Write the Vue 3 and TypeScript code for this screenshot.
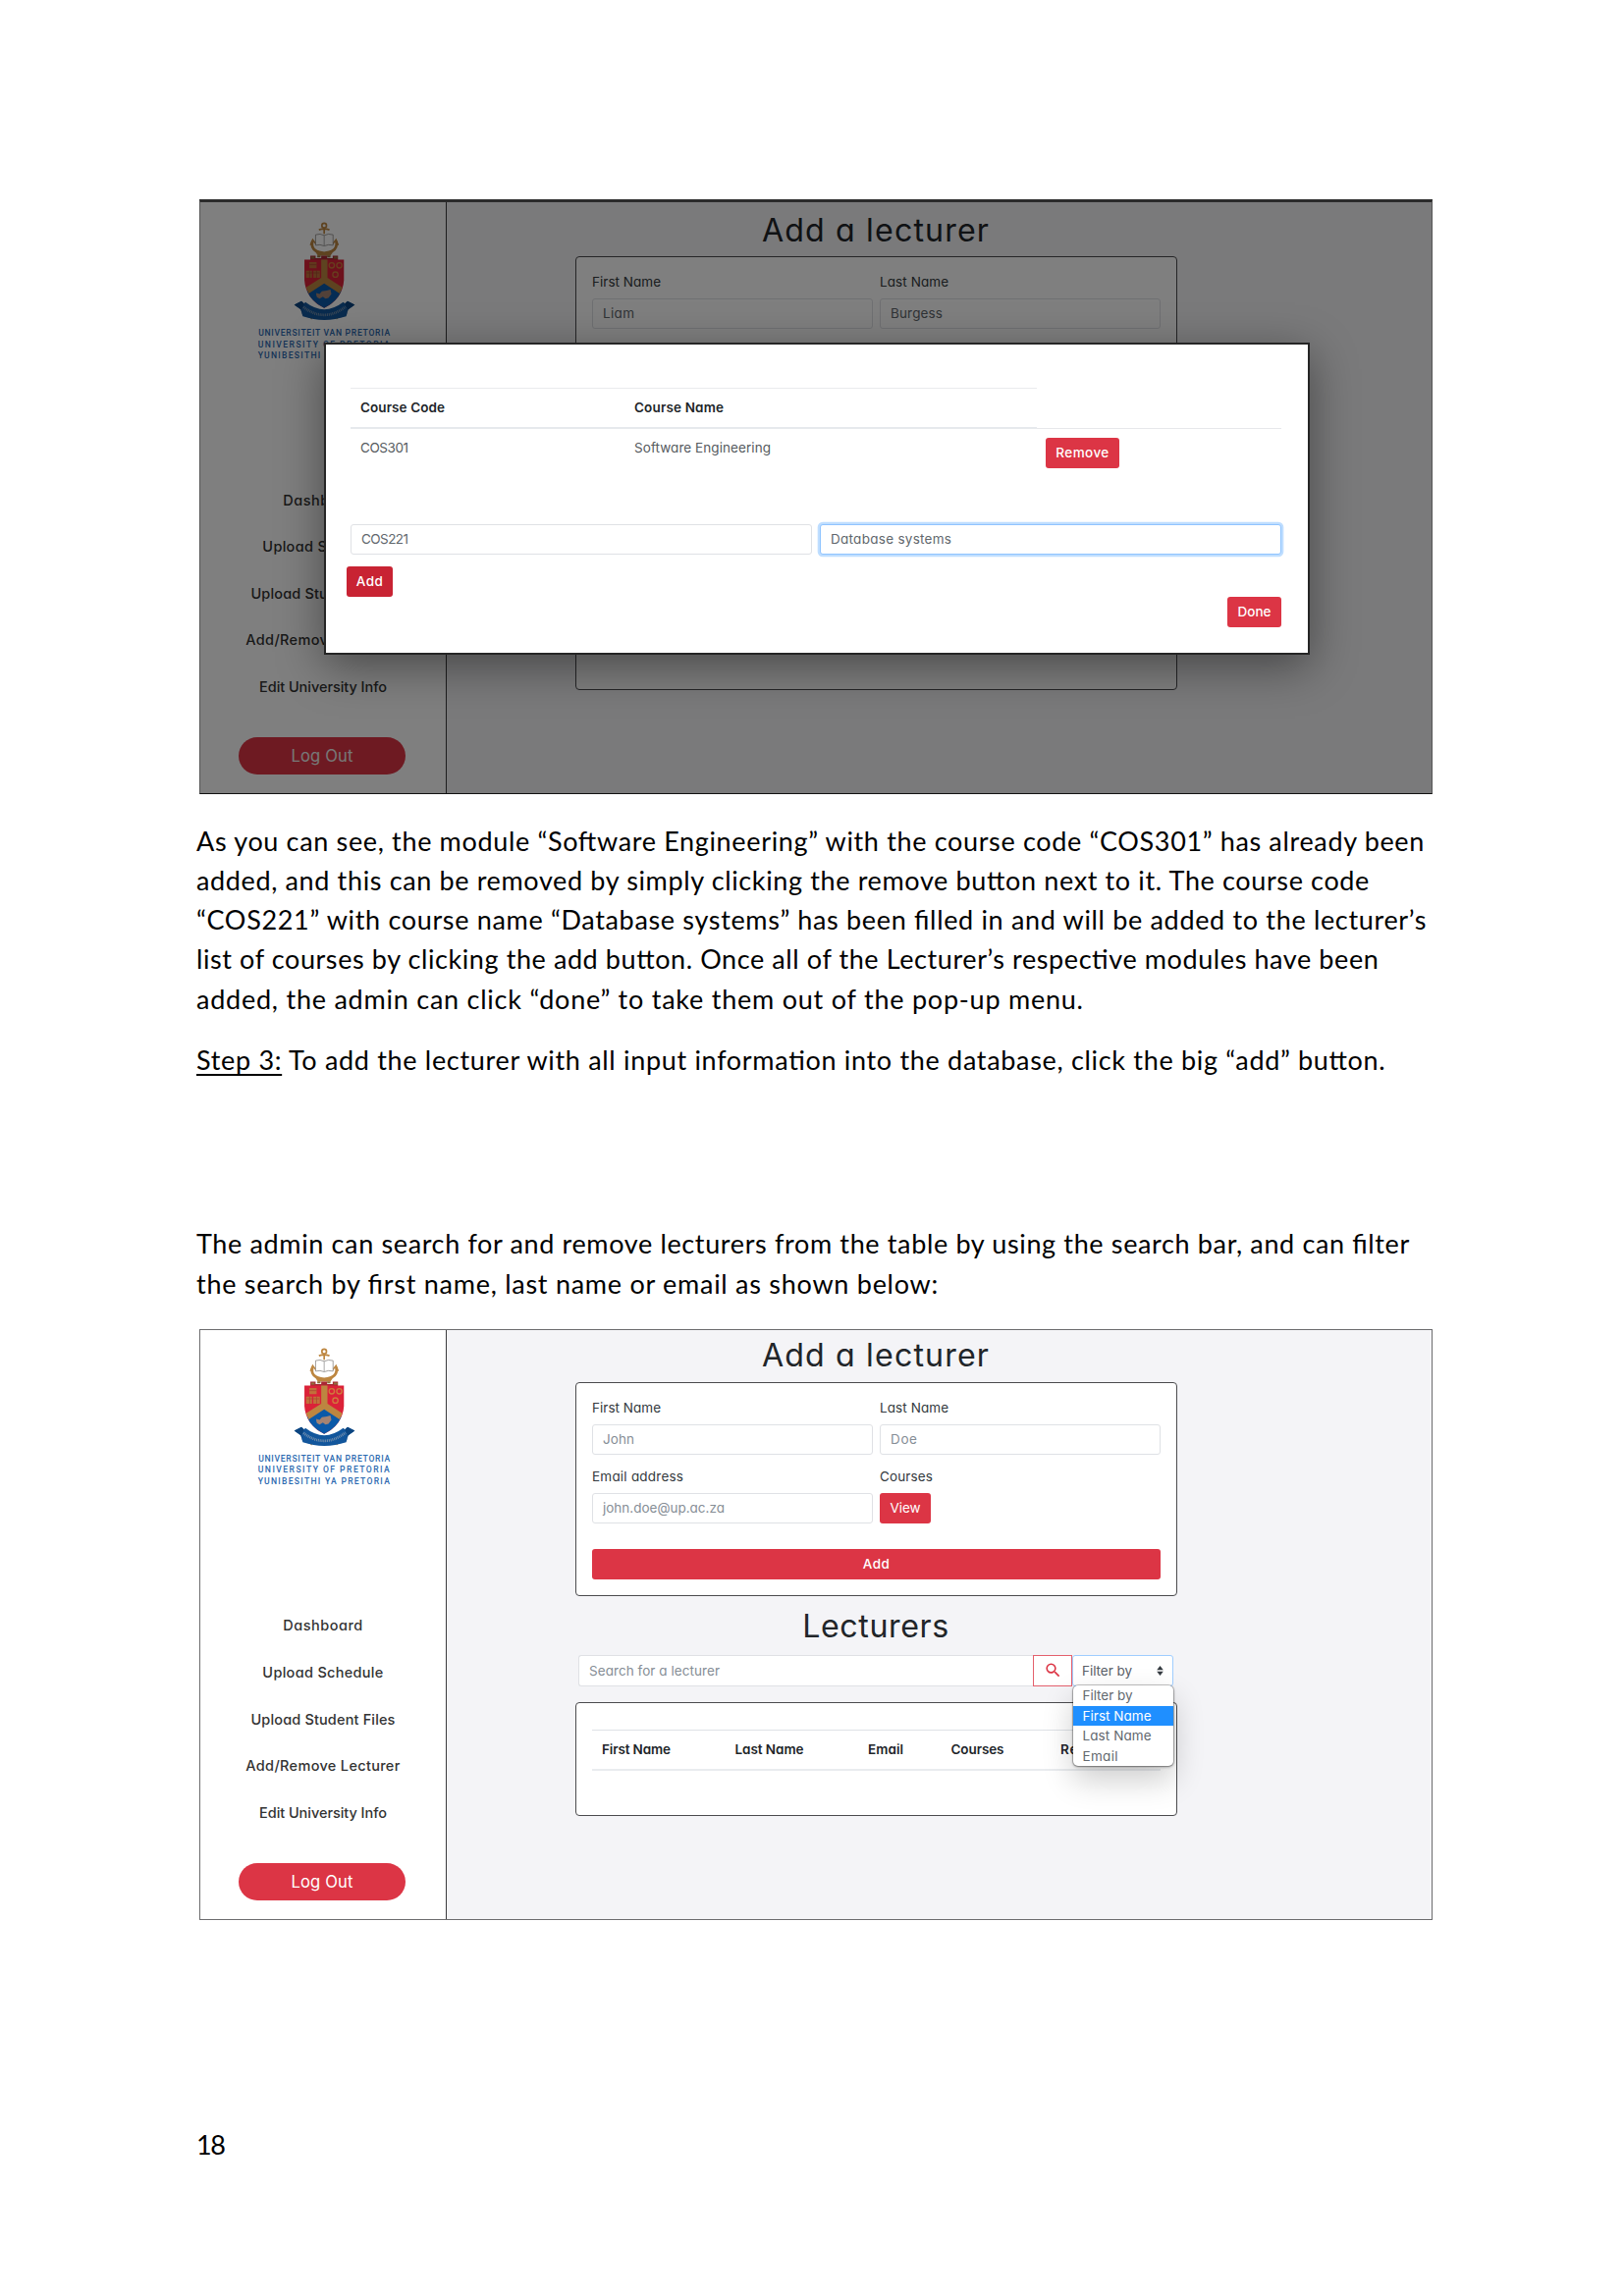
<script setup lang="ts">
interface Label { text: string; w: number }

// Spreads the letters of an element so that its text takes the given width.
const vFit = {
  mounted(el: HTMLElement, binding: { value: number }) {
    const count = (el.textContent ?? '').trim().length
    if (count < 2) return
    const natural = el.getBoundingClientRect().width
    el.style.letterSpacing = `${(binding.value - natural) / (count - 1)}px`
  },
}

const nav: Label[] = [
  { text: 'Dashboard', w: 81 },
  { text: 'Upload Schedule', w: 123 },
  { text: 'Upload Student Files', w: 147 },
  { text: 'Add/Remove Lecturer', w: 157 },
  { text: 'Edit University Info', w: 130 },
]
const names: Label[] = [
  { text: 'UNIVERSITEIT VAN PRETORIA', w: 134 },
  { text: 'UNIVERSITY OF PRETORIA', w: 134 },
  { text: 'YUNIBESITHI YA PRETORIA', w: 134 },
]
const intro: Label[] = [
  { text: 'As you can see, the module “Software Engineering” with the course code “COS301” has already been', w: 1251 },
  { text: 'added, and this can be removed by simply clicking the remove button next to it. The course code', w: 1195 },
  { text: '“COS221” with course name “Database systems” has been filled in and will be added to the lecturer’s', w: 1253 },
  { text: 'list of courses by clicking the add button. Once all of the Lecturer’s respective modules have been', w: 1205 },
  { text: 'added, the admin can click “done” to take them out of the pop-up menu.', w: 903 },
]
const search: Label[] = [
  { text: 'The admin can search for and remove lecturers from the table by using the search bar, and can filter', w: 1236 },
  { text: 'the search by first name, last name or email as shown below:', w: 756 },
]
const options: Label[] = [
  { text: 'Filter by', w: 51 },
  { text: 'First Name', w: 70 },
  { text: 'Last Name', w: 70 },
  { text: 'Email', w: 36 },
]
</script>

<template>
  <div class="page">
    <svg class="defs" width="0" height="0">
      <symbol id="crest" viewBox="178 68 188 298">
        <g fill="none" stroke="#bd8640" stroke-width="5">
          <circle cx="271" cy="79" r="7" />
          <path d="M271 86v18M255 92q16-6 32 0" />
          <path d="M236 126q-10 32 35 37q45-5 36-37" stroke-width="8" />
          <path d="M229 139l7-17 10 13M314 139l-7-17-10 13" stroke-width="4" />
        </g>
        <path d="M245 107q14-5 26 2q12-7 27-2v32q-15-4-27 2q-12-6-26-2z" fill="#fff" stroke="#77726f" stroke-width="2" />
        <path d="M271 109v31" stroke="#aaa" stroke-width="3" />
        <path d="M238 150q33 26 66 0l-14 21h-38z" fill="#bd8640" />
        <path d="M229 171h16v7h17v-7h18v7h17v-7h16v14h-84z" fill="#a92834" />
        <path d="M232 177h10m8-4h10m20 0h10m10 4h12" stroke="#8f713d" stroke-width="6" />
        <path d="M211 183h120v62q-4 56-60 85q-56-29-60-85z" fill="#db2238" />
        <path d="M219 278l52-33 52 33q-14 33-52 52q-38-19-52-52z" fill="#0b59a8" />
        <path d="M262 183h19v55l45 29-8 19-47-31-47 31-8-19 46-29z" fill="#bd8640" />
        <path d="M226 190h22v19h-22zM216 216h18v22h-18zM238 216h20v22h-20z" fill="#c2703a" />
        <path d="M218 223h38M226 198h22M227 216v22M248 216v22" stroke="#a6452f" stroke-width="2" />
        <g fill="none" stroke="#d07a3c" stroke-width="4">
          <circle cx="294" cy="200" r="8" /><circle cx="317" cy="200" r="8" /><circle cx="305" cy="228" r="8" />
        </g>
        <path d="M247 284l10 3 7-8 15-2 11-3 3 13-9 12-9 2-8-6-10 6-8-4-2-7z" fill="#a58372" />
        <path d="M219 345l19 6-5 14-15-15zM323 345l-19 6 5 14 15-15z" fill="#bd8640" />
        <path d="M180 320l22-11 8 7 4-4q57 44 115 0l5 4 8-7 22 11-21 15-5 20q-67 22-132 0l-6-21z" fill="#12569c" />
        <path d="M180 320l22-11 8 7-8 18 4 20-6-20zM364 320l-22-11-8 7 8 18-4 20 6-20z" fill="#0c4580" />
        <path d="M208 327q63 48 128-1" fill="none" stroke="#7690ac" stroke-width="8" stroke-dasharray="3 2.5" />
      </symbol>
    </svg>

    <figure class="shot shot-modal">
      <aside class="side">
        <svg class="crest"><use href="#crest" /></svg>
        <div class="names"><div v-for="n in names" :key="n.text"><span v-fit="n.w">{{ n.text }}</span></div></div>
        <nav class="nav"><a v-for="n in nav" :key="n.text"><span v-fit="n.w">{{ n.text }}</span></a></nav>
        <div class="logout"><span v-fit="63">Log Out</span></div>
      </aside>
      <main class="content">
        <h1><span v-fit="231">Add a lecturer</span></h1>
        <section class="card tall">
          <div class="fields">
            <div><label><span v-fit="70">First Name</span></label><div class="input typed"><span v-fit="32">Liam</span></div></div>
            <div><label><span v-fit="70">Last Name</span></label><div class="input typed"><span v-fit="53">Burgess</span></div></div>
          </div>
        </section>
      </main>
      <div class="veil"></div>
      <section class="modal">
        <div class="thead">
          <div class="th"><span v-fit="86">Course Code</span></div>
          <div class="th"><span v-fit="91">Course Name</span></div>
          <div class="th-blank"></div>
        </div>
        <div class="trow">
          <div class="td"><span v-fit="49">COS301</span></div>
          <div class="td"><span v-fit="139">Software Engineering</span></div>
          <div class="td-btn"><div class="btn w-remove"><span v-fit="54">Remove</span></div></div>
        </div>
        <div class="pair">
          <div class="input typed"><span v-fit="48">COS221</span></div>
          <div class="input typed focus"><span v-fit="123">Database systems</span></div>
        </div>
        <div class="btn w-add"><span v-fit="27">Add</span></div>
        <div class="btn w-done"><span v-fit="34">Done</span></div>
      </section>
    </figure>

    <div class="prose p1"><p v-for="l in intro" :key="l.text"><span v-fit="l.w">{{ l.text }}</span></p></div>
    <div class="prose p2"><p><span v-fit="1212"><u>Step 3:</u> To add the lecturer with all input information into the database, click the big “add” button.</span></p></div>
    <div class="prose p3"><p v-for="l in search" :key="l.text"><span v-fit="l.w">{{ l.text }}</span></p></div>

    <figure class="shot shot-list">
      <aside class="side">
        <svg class="crest"><use href="#crest" /></svg>
        <div class="names"><div v-for="n in names" :key="n.text"><span v-fit="n.w">{{ n.text }}</span></div></div>
        <nav class="nav"><a v-for="n in nav" :key="n.text"><span v-fit="n.w">{{ n.text }}</span></a></nav>
        <div class="logout"><span v-fit="63">Log Out</span></div>
      </aside>
      <main class="content">
        <h1><span v-fit="231">Add a lecturer</span></h1>
        <section class="card form">
          <div class="fields">
            <div><label><span v-fit="70">First Name</span></label><div class="input"><span v-fit="32">John</span></div></div>
            <div><label><span v-fit="70">Last Name</span></label><div class="input"><span v-fit="27">Doe</span></div></div>
            <div><label><span v-fit="93">Email address</span></label><div class="input"><span v-fit="124">john.doe@up.ac.za</span></div></div>
            <div><label><span v-fit="54">Courses</span></label><div class="btn w-view"><span v-fit="31">View</span></div></div>
          </div>
          <div class="btn w-full"><span v-fit="27">Add</span></div>
        </section>
        <h1 class="second"><span v-fit="149">Lecturers</span></h1>
        <div class="searchbar">
          <div class="query"><span v-fit="133">Search for a lecturer</span></div>
          <div class="go">
            <svg width="19" height="19" viewBox="0 0 24 24"><path fill="#dc3545" d="M15.5 14h-.79l-.28-.27A6.47 6.47 0 0 0 16 9.5 6.5 6.5 0 1 0 9.5 16c1.61 0 3.09-.59 4.23-1.57l.27.28v.79l5 4.99L20.49 19l-4.99-5zm-6 0C7.01 14 5 11.99 5 9.5S7.01 5 9.5 5 14 7.01 14 9.5 11.99 14 9.5 14z" /></svg>
          </div>
          <div class="filter">
            <span v-fit="51">Filter by</span>
            <svg width="7" height="10" viewBox="0 0 7 10"><path fill="#343a40" d="M3.5 0L6.8 4.2H.2zM3.5 10L.2 5.8h6.6z" /></svg>
            <div class="menu">
              <div v-for="(o, i) in options" :key="o.text" class="opt" :class="{ on: i === 1 }"><span v-fit="o.w">{{ o.text }}</span></div>
            </div>
          </div>
        </div>
        <section class="card list">
          <div class="cols">
            <div><span v-fit="70">First Name</span></div>
            <div><span v-fit="70">Last Name</span></div>
            <div><span v-fit="36">Email</span></div>
            <div><span v-fit="54">Courses</span></div>
            <div><span v-fit="57">Remove</span></div>
          </div>
        </section>
      </main>
    </figure>

    <div class="prose p4"><p><span v-fit="30">18</span></p></div>
  </div>
</template>

<style>
body { margin: 0; background: #fff; }
</style>

<style scoped>
.page, .page * { box-sizing: border-box; }
.page {
  width: 1654px; height: 2339px; padding: 203px 195px 0 203px; background: #fff; overflow: hidden;
  font-family: Inter, "Open Sans", sans-serif; font-size: 13.5px; color: #212529;
  font-feature-settings: "cv11" 1;
}
.defs { position: absolute; }
.page span { display: inline-block; white-space: pre; }
.shot { position: relative; display: flex; margin: 0; width: 1256px; border: 1px solid #6c6c6e; overflow: hidden; background: #f4f4f7; }
.shot-modal { height: 606px; border: 1px solid #555; border-top: 3px solid #2b2b2b; border-bottom: 1px solid #111; }
.shot-modal .side, .shot-modal .content { margin-top: -2px; }
.shot-list { height: 602px; margin-top: 26px; }
.shot-list .side, .shot-list .content { margin-top: -4px; }

.side { flex: none; width: 251px; height: 610px; padding-top: 22px; border-right: 1px solid #3c3c3e; background: #fff; text-align: center; }
.crest { display: block; width: 63px; height: 100px; margin: 0 auto; position: relative; left: 1.5px; }
.names { margin: 8px 0 0 3px; font-family: Roboto, sans-serif; font-weight: 500; font-size: 8.6px; color: #2c69b0; }
.names div { height: 11.5px; line-height: 11.5px; }
.nav { margin-top: 117px; font-size: 14.5px; font-weight: 500; color: #333; }
.nav a { display: block; height: 47.6px; line-height: 47.6px; }
.logout { width: 170px; height: 38px; line-height: 38px; margin: 27.5px auto 0 39px; border-radius: 19px; background: #dc3545; color: #fff; font-size: 16.6px; }
.shot-modal .logout { color: #eee; }

.content { flex: 1; padding: 10.5px 0 0 131px; }
h1 { margin: 0; width: 612px; height: 40px; line-height: 40px; text-align: center; font-size: 32.2px; font-weight: 400; }
h1.second { margin-top: 11px; }
.card { width: 613px; margin-top: 6.5px; padding: 15px 16px; border: 1px solid #4b4b4e; border-radius: 4px; background: #fff; }
.tall { height: 442px; }
.form { height: 218px; }
.fields { display: grid; grid-template-columns: 286px 286px; gap: 12px 7px; }
label { display: block; height: 20px; line-height: 20px; margin-bottom: 7px; color: #343a40; }
.input { height: 31px; line-height: 29px; padding-left: 10px; border: 1px solid #dfe1e5; border-radius: 3px; background: #fff; color: #868e96; }
.typed { color: #61676d; }
.btn { height: 31px; line-height: 31px; border-radius: 3px; background: #dc3545; color: #fff; text-align: center; font-weight: 500; }
.w-view { width: 52px; font-weight: 400; }
.w-full { margin-top: 26px; }
.searchbar { display: flex; width: 606px; height: 32px; margin: 9px 0 0 3px; }
.query { width: 463px; line-height: 30px; padding-left: 10px; border: 1px solid #dfe1e5; border-right: 0; border-radius: 3px 0 0 3px; background: #fff; color: #868e96; }
.go { width: 40px; border: 1px solid #e4606d; background: #fff; display: flex; align-items: center; justify-content: center; }
.filter { position: relative; display: flex; align-items: center; justify-content: space-between; width: 103px; padding: 0 9px 0 9px; border: 1px solid #9fcdff; border-radius: 3px; background: #fff; color: #5a6068; }
.menu { position: absolute; z-index: 2; left: 0; top: 30.5px; width: 102px; height: 82px; border-radius: 5px; background: #fff; box-shadow: 0 0 0 1px rgba(0,0,0,.2), 0 1px 3px rgba(0,0,0,.4), 0 14px 32px rgba(0,0,0,.2); color: #62686e; }
.opt { height: 20.4px; line-height: 20.4px; padding-left: 9.5px; }
.opt.on { background: #1f8fff; color: #fff; }
.list { height: 116px; margin-top: 16px; padding-top: 27px; }
.cols { display: grid; grid-template-columns: 135.5px 135.5px 84.5px 111.5px 1fr; height: 42px; line-height: 39px; padding-left: 10px; border-top: 1px solid #dee2e6; border-bottom: 2px solid #e9ecef; font-weight: 600; }

.veil { position: absolute; inset: 0; background: rgba(0,0,0,.5); }
.modal { position: absolute; left: 126px; top: 143px; width: 1004px; height: 318px; padding: 44px 26px 0 25px; border: 2px solid #262626; background: #fff; box-shadow: 0 12px 44px rgba(0,0,0,.42); }
.thead, .trow { display: grid; grid-template-columns: 279px 420px 249px; }
.thead { height: 42px; }
.th { padding-left: 10px; line-height: 39px; font-weight: 600; border-top: 1px solid #e9ebed; border-bottom: 2px solid #e6e9ed; }
.th-blank { border-bottom: 1px solid #e6e8eb; }
.trow { height: 97px; }
.td { padding-left: 10px; line-height: 20px; padding-top: 9px; color: #565b60; }
.td-btn { padding: 9px 0 0 9px; }
.w-remove { width: 75px; }
.pair { display: grid; grid-template-columns: 470px 470px; gap: 8px; }
.pair .focus { border-color: #8fc4ff; box-shadow: 0 0 0 2.3px #bfdeff; }
.w-add { width: 47px; margin: 12px 0 0 -4px; background: #c82333; }
.w-done { width: 55px; margin: 0 0 0 893px; }

.prose { margin-left: -3px; font-family: Lato, "Open Sans", sans-serif; font-size: 27px; color: #000; white-space: nowrap; font-feature-settings: "liga" 1; }
.prose p { margin: 0; height: 40.3px; line-height: 40.3px; }
.p1 { margin-top: 27.5px; }
.p2 { margin-top: 22px; }
.p3 { margin-top: 147px; }
.p4 { margin-top: 209px; }
u { text-decoration-thickness: 2px; text-underline-offset: 4px; text-decoration-skip-ink: none; }
</style>
